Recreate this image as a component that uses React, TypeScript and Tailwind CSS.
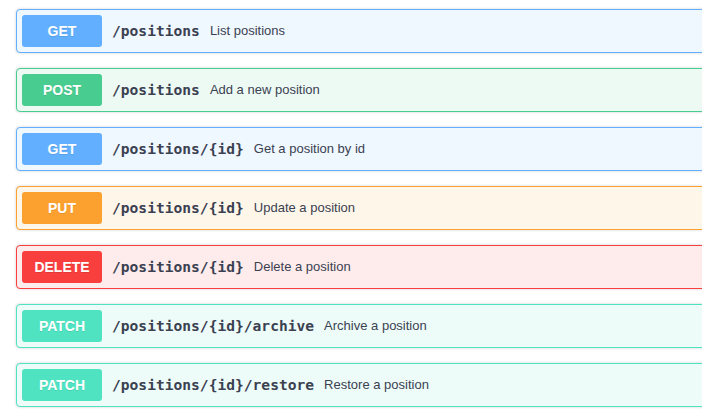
import React from "react";

type Op = { method: string; path: string; desc: string };

const ops: Op[] = [
  { method: "GET", path: "/positions", desc: "List positions" },
  { method: "POST", path: "/positions", desc: "Add a new position" },
  { method: "GET", path: "/positions/{id}", desc: "Get a position by id" },
  { method: "PUT", path: "/positions/{id}", desc: "Update a position" },
  { method: "DELETE", path: "/positions/{id}", desc: "Delete a position" },
  { method: "PATCH", path: "/positions/{id}/archive", desc: "Archive a position" },
  { method: "PATCH", path: "/positions/{id}/restore", desc: "Restore a position" },
];

const styles: Record<string, { block: string; badge: string }> = {
  GET: { block: "border-[#61affe] bg-[#eff7ff]", badge: "bg-[#61affe]" },
  POST: { block: "border-[#49cc90] bg-[#edfaf4]", badge: "bg-[#49cc90]" },
  PUT: { block: "border-[#fca130] bg-[#fff6ea]", badge: "bg-[#fca130]" },
  DELETE: { block: "border-[#f93e3e] bg-[#feecec]", badge: "bg-[#f93e3e]" },
  PATCH: { block: "border-[#50e3c2] bg-[#edfcf9]", badge: "bg-[#50e3c2]" },
};

export default function App() {
  return (
    <div className="w-[702px] h-[417px] overflow-hidden bg-white">
      <div className="pt-[9px] pl-4 flex flex-col gap-[15px]">
        {ops.map((op, i) => {
          const s = styles[op.method];
          return (
            <div
              key={i}
              className={`w-[740px] border rounded-[4px] shadow-[0_0_3px_rgba(0,0,0,0.19)] ${s.block}`}
            >
              <div className="flex items-center p-[5px]">
                <div
                  className={`w-[80px] h-[32px] rounded-[3px] flex items-center justify-center text-white text-[14px] font-bold [text-shadow:0_1px_0_rgba(0,0,0,0.1)] ${s.badge}`}
                  style={{ fontFamily: '"Liberation Sans", Arial, sans-serif' }}
                >
                  {op.method}
                </div>
                <span
                  className="px-[10px] text-[14.6px] font-bold text-[#3b4151]"
                  style={{ fontFamily: '"DejaVu Sans Mono", "Liberation Mono", monospace' }}
                >
                  {op.path}
                </span>
                <span
                  className="text-[13px] text-[#3b4151]"
                  style={{ fontFamily: '"Liberation Sans", Arial, sans-serif' }}
                >
                  {op.desc}
                </span>
              </div>
            </div>
          );
        })}
      </div>
    </div>
  );
}
